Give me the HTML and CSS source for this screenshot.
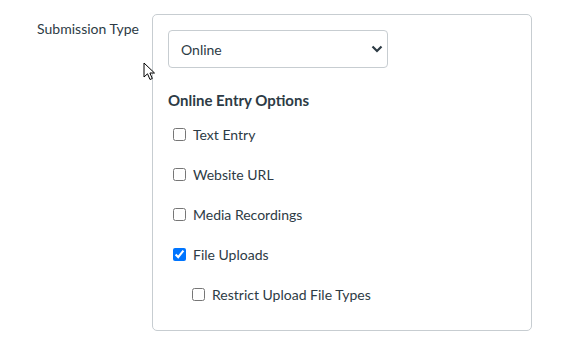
FILE: index.html
```html
<!DOCTYPE html>
<html lang="en">
<head>
  <meta charset="UTF-8">
  <title>Submission Type</title>
  <link rel="stylesheet" href="styles.css">
</head>
<body>
  <div class="form-row">
    <label class="form-label" for="submission-type">Submission Type</label>

    <div class="form-box">
      <div class="select-wrap">
        <select id="submission-type" class="type-select">
          <option selected>Online</option>
          <option>On Paper</option>
          <option>No Submission</option>
        </select>
        <svg class="select-arrow" width="12" height="8" viewBox="0 0 12 8">
          <path d="M1.5 1.5 L6 6 L10.5 1.5" fill="none" stroke="#2d3b45" stroke-width="2.2"/>
        </svg>
      </div>

      <div class="entry-title">Online Entry Options</div>

      <label class="entry-option"><input type="checkbox"> Text Entry</label>
      <label class="entry-option"><input type="checkbox"> Website URL</label>
      <label class="entry-option"><input type="checkbox"> Media Recordings</label>
      <label class="entry-option"><input type="checkbox" checked> File Uploads</label>
      <label class="entry-option nested"><input type="checkbox"> Restrict Upload File Types</label>
    </div>
  </div>

  <!-- mouse pointer left in the screenshot -->
  <svg class="cursor" width="13" height="19" viewBox="0 0 13 19">
    <path d="M1 1 L1 15 L4.5 11.8 L7 17.5 L9.3 16.5 L6.9 11 L11.5 11 Z" fill="#fff" stroke="#000" stroke-width="1" stroke-linejoin="round"/>
  </svg>
</body>
</html>
```

FILE: styles.css
```css
* {
  margin: 0;
  padding: 0;
  box-sizing: border-box;
}

body {
  font-family: 'Lato', 'Liberation Sans', sans-serif;
  color: #2d3b45;
  background: #ffffff;
  position: relative;
  min-height: 100vh;
}

.form-row {
  display: flex;
  align-items: flex-start;
  padding-top: 14px;
}

.form-label {
  width: 152px;
  padding: 7px 13px 0 0;
  text-align: right;
  font-size: 14px;
  line-height: 16px;
}

.form-box {
  width: 380px;
  height: 317px;
  border: 1px solid #c7cdd1;
  border-radius: 5px;
  padding: 15px 15px 0;
}

.select-wrap {
  position: relative;
  width: 220px;
}

.type-select {
  appearance: none;
  -webkit-appearance: none;
  width: 220px;
  height: 38px;
  border: 1px solid #c7cdd1;
  border-radius: 4px;
  background: #fff;
  padding: 0 12px;
  font-family: inherit;
  font-size: 14px;
  color: #2d3b45;
}

.select-arrow {
  position: absolute;
  right: 5px;
  top: 15px;
}

.entry-title {
  font-weight: 700;
  font-size: 15px;
  line-height: 18px;
  margin: 23px 0 5px;
}

.entry-option {
  display: flex;
  align-items: center;
  height: 40px;
  font-size: 14px;
  padding-left: 5px;
}

.entry-option input {
  width: 13px;
  height: 13px;
  margin: 0 7px 0 0;
}

.entry-option.nested {
  padding-left: 24px;
}

.cursor {
  position: absolute;
  left: 143px;
  top: 62px;
}
```
